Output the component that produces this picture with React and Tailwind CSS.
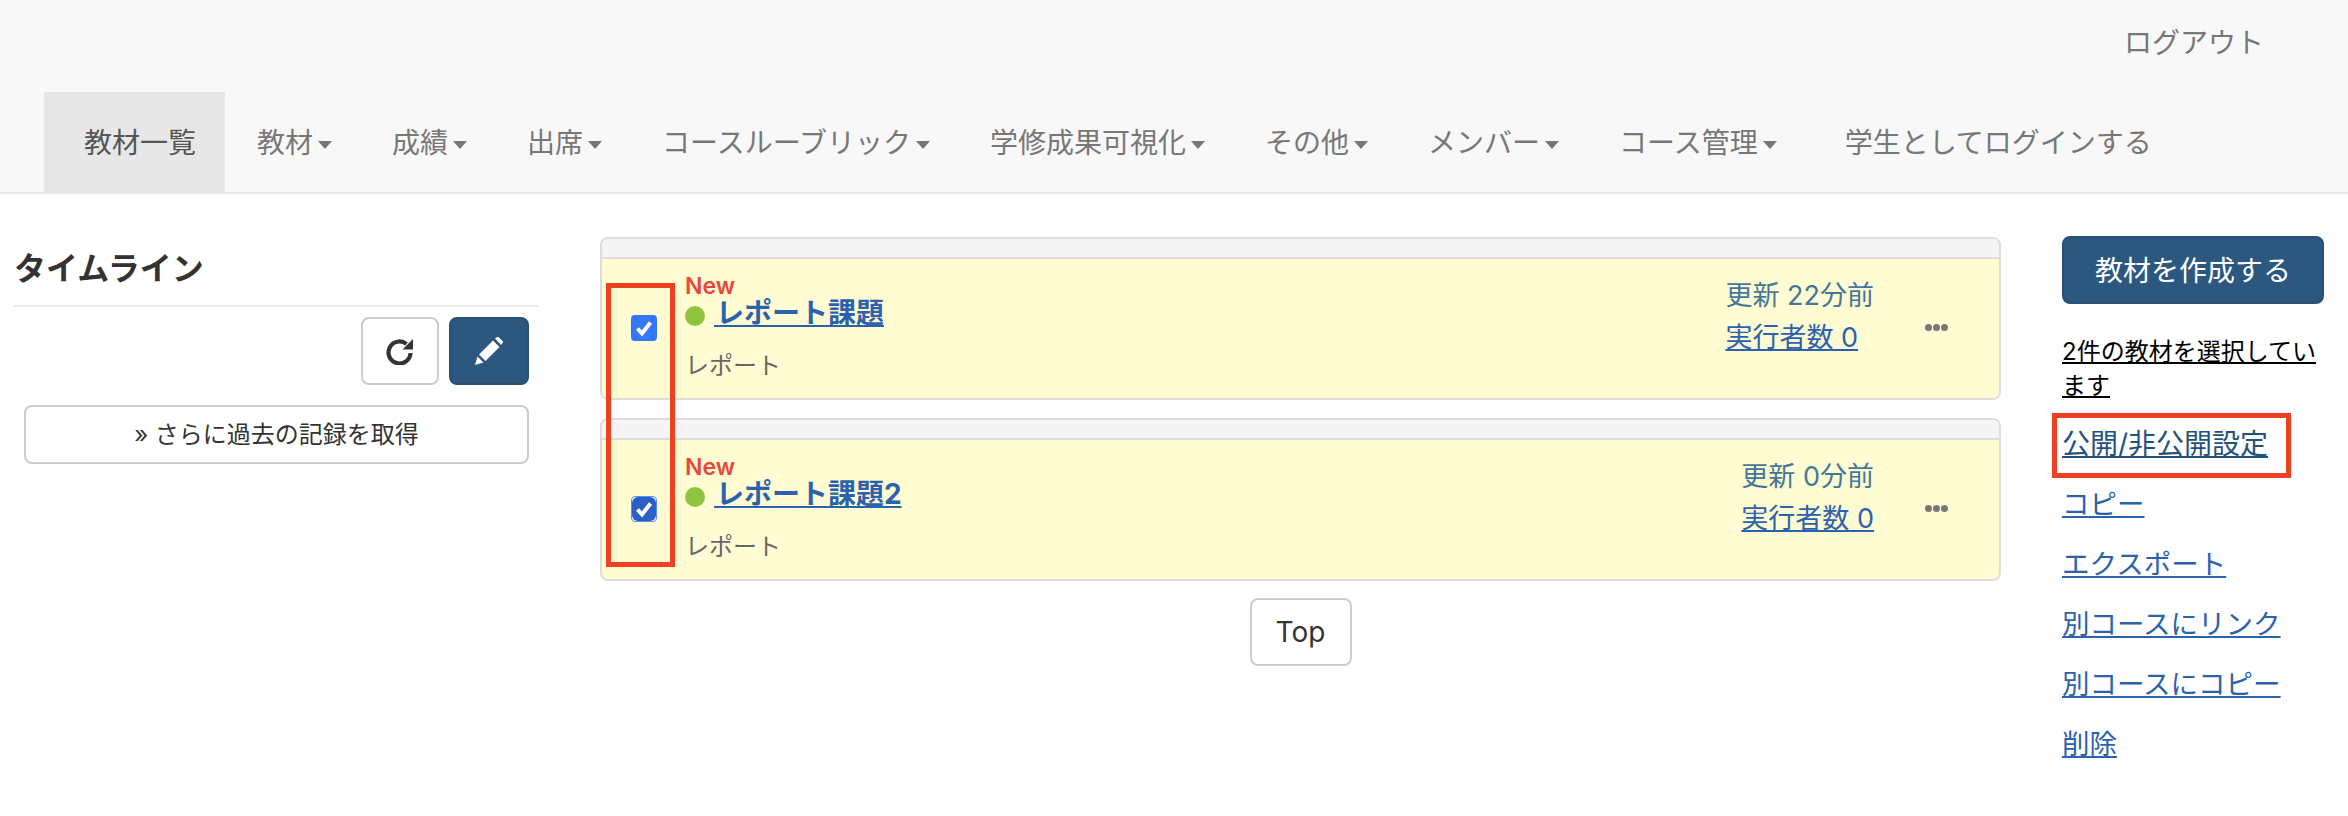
const navItems = [
  { label: '教材' },
  { label: '成績' },
  { label: '出席' },
  { label: 'コースルーブリック' },
  { label: '学修成果可視化' },
  { label: 'その他' },
  { label: 'メンバー' },
  { label: 'コース管理' },
];

const actions = ['コピー', 'エクスポート', '別コースにリンク', '別コースにコピー', '削除'];

function CheckMark() {
  return (
    <svg viewBox="0 0 26 26" className="w-[26px] h-[26px] shrink-0">
      <path d="M6.5 13.5 L11 18.5 L19.5 7.5" fill="none" stroke="#fff" strokeWidth="4" />
    </svg>
  );
}

function Panel({ title, updated, focused }) {
  return (
    <div className="border-2 border-[#ddd] rounded-lg overflow-hidden bg-[#fffcd3]">
      <div className="h-[18px] bg-[#f5f5f5] border-b-2 border-[#ddd] box-content"></div>
      <div className="flex items-center h-[139px] pl-[29px] pr-[51px]">
        {focused ? (
          <span className="flex items-center justify-center w-[26px] h-[26px] -mt-[1px] rounded-[4px] bg-white border border-[#5b8ff5]">
            <span className="flex items-center justify-center w-[24px] h-[24px] rounded-[6px] bg-[#2c5fc6]">
              <CheckMark />
            </span>
          </span>
        ) : (
          <span className="w-[26px] h-[26px] -mt-[1px] rounded-[4px] bg-[#3478f6]">
            <CheckMark />
          </span>
        )}
        <div className="ml-[28px] flex-1 self-start pt-[15px]">
          <div className="text-[23px] leading-[24px] font-semibold text-[#e8483a]">New</div>
          <div className="flex items-center h-[32px] mt-[2px]">
            <span className="w-[20px] h-[20px] rounded-full bg-[#8fc440]"></span>
            <a href="#" className="ml-[9px] text-[28px] leading-[32px] font-bold text-[#2b62ad] underline">
              <span className="text-[8px]">&nbsp;</span>{title}
            </a>
          </div>
          <div className="mt-[18px] text-[24px] leading-[32px] text-[#666]">レポート</div>
        </div>
        <div className="text-[27px] leading-[42px] text-[#447798] -mt-[24px]">
          <div>更新 {updated}分前</div>
          <a href="#" className="text-[#2b62ad] underline">実行者数 0</a>
        </div>
        <div className="ml-[51px] flex gap-[1px] -mt-[3px]">
          <span className="w-[7px] h-[7px] rounded-full bg-[#777]"></span>
          <span className="w-[7px] h-[7px] rounded-full bg-[#777]"></span>
          <span className="w-[7px] h-[7px] rounded-full bg-[#777]"></span>
        </div>
      </div>
    </div>
  );
}

export default function App() {
  return (
    <div className="relative h-[816px] overflow-hidden bg-white text-[#333] font-['Inter','Noto_Sans_CJK_JP',sans-serif]">
      <header className="bg-[#f8f8f8] border-b-2 border-[#e7e7e7] text-[28px] text-[#777]">
        <div className="flex justify-end items-center h-[92px] pb-[6px] pr-[84px]">
          <a href="#">ログアウト</a>
        </div>
        <nav className="flex h-[100px] pl-[44px]">
          <a href="#" className="flex items-center pt-[2px] pl-[40px] pr-[29px] bg-[#e7e7e7] text-[#555]">教材一覧</a>
          <div className="flex pl-[2px]">
            {navItems.map((item) => (
              <a key={item.label} href="#" className="flex items-center pt-[2px] px-[30px]">
                {item.label}
                <span className="ml-[5px] mt-[4px] border-x-[7px] border-t-[8px] border-x-transparent border-t-[#777]"></span>
              </a>
            ))}
          </div>
          <a href="#" className="flex items-center pt-[2px] pl-[38px]">学生としてログインする</a>
        </nav>
      </header>

      <main className="flex">
        <aside className="w-[524px] ml-[14px] pt-[52px]">
          <h4 className="text-[32px] leading-[44px] font-bold pt-[1px] pb-[14px] border-b-2 border-[#eee]">タイムライン</h4>
          <div className="flex justify-end gap-[10px] mt-[10px] mr-[9px]">
            <button className="flex items-center justify-center w-[78px] h-[68px] border-2 border-[#ccc] rounded-lg">
              <svg viewBox="0 0 28 28" className="w-[28px] h-[28px]" fill="none">
                <path d="M20.5 7 A11 11 0 1 0 24.5 16" stroke="#333" strokeWidth="4.2" />
                <path d="M27 2 L27 12.5 L16.5 12.5 Z" fill="#333" />
              </svg>
            </button>
            <button className="flex items-center justify-center w-[80px] h-[68px] bg-[#2c5880] border-2 border-[#285175] rounded-lg">
              <svg viewBox="0 0 28 28" className="w-[28px] h-[28px]" fill="#fff">
                <path d="M0 28 L2.5 19.5 L8.5 25.5 Z" />
                <path d="M4 17.5 L18 3.5 L24.5 10 L10.5 24 Z" />
                <path d="M20 1.5 L22 0 Q23 -0.5 24 0.5 L27.5 4 Q28.5 5 27.5 6 L26 8 Z" />
              </svg>
            </button>
          </div>
          <button className="block w-[505px] h-[59px] ml-[10px] mt-[20px] border-2 border-[#ccc] rounded-lg text-[24px]">» さらに過去の記録を取得</button>
        </aside>

        <section className="w-[1401px] ml-[62px] pt-[43px]">
          <Panel title="レポート課題" updated="22" />
          <div className="mt-[18px]">
            <Panel title="レポート課題2" updated="0" focused />
          </div>
          <div className="flex justify-center mt-[17px]">
            <button className="w-[102px] h-[68px] pb-[1px] border-2 border-[#ccc] rounded-lg text-[28px]">Top</button>
          </div>
        </section>

        <aside className="w-[262px] ml-[61px] pt-[42px]">
          <button className="w-full h-[68px] pt-[1px] bg-[#2c5880] border-2 border-[#285175] rounded-lg text-[28px] text-white">教材を作成する</button>
          <p className="mt-[31px] text-[24px] leading-[34px] text-black underline">2件の教材を選択しています</p>
          <ul className="text-[27.5px] leading-[40px] mt-[21px]">
            <li><a href="#" className="text-[28px] text-[#23527c] underline">公開/非公開設定</a></li>
            {actions.map((label) => (
              <li key={label} className="mt-[20px]"><a href="#" className="text-[#2b62ad] underline">{label}</a></li>
            ))}
          </ul>
        </aside>
      </main>

      {/* annotations drawn over the screenshot */}
      <div className="absolute left-[606px] top-[283px] w-[69px] h-[284px] border-[5px] border-[#ee4122]"></div>
      <div className="absolute left-[2052px] top-[413px] w-[239px] h-[65px] border-[5px] border-[#ee4122]"></div>
    </div>
  );
}
